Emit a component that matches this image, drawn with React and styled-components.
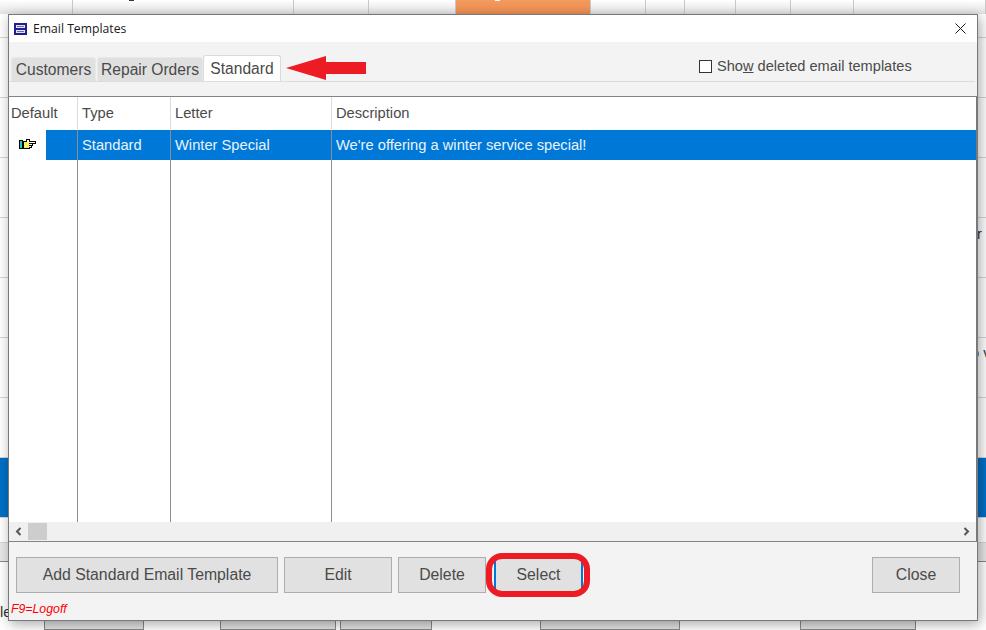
import React from "react";
import styled, { createGlobalStyle } from "styled-components";

const GlobalStyle = createGlobalStyle`
  html, body {
    margin: 0;
    padding: 0;
    background: #ffffff;
  }
  * {
    box-sizing: border-box;
  }
`;

const Page = styled.div`
  position: relative;
  width: 986px;
  height: 630px;
  overflow: hidden;
  font-family: "Liberation Sans", Arial, sans-serif;
  background: #ffffff;
`;

const TopStrip = styled.div`
  display: flex;
  height: 14px;
  background: linear-gradient(#ffffff, #e4e4e4);
`;

const StripCell = styled.div`
  position: relative;
  width: ${(p) => p.$w}px;
  flex: ${(p) => (p.$w ? "none" : "1")};
  border-right: 1px solid #c8c8c8;
  background: ${(p) => (p.$active ? "linear-gradient(#f49a5e, #ee8f52)" : "transparent")};
`;

// bottoms of letters cut off by the top of the window
const StripMark = styled.span`
  position: absolute;
  left: ${(p) => p.$x}px;
  top: 0;
  width: 5px;
  height: 1px;
  background: ${(p) => p.$color};
`;

const Rows = styled.div`
  display: flex;
  flex-direction: column;
`;

const BackRow = styled.div`
  height: ${(p) => p.$h}px;
  background: ${(p) => p.$bg || "#ffffff"};
  border-bottom: 1px solid ${(p) => p.$line || "#d4d4d4"};
`;

const BackLabel = styled.span`
  position: absolute;
  left: ${(p) => p.$left}px;
  top: ${(p) => p.$top}px;
  font-size: 14.67px;
  white-space: nowrap;
  color: #333333;
`;

const BackButtons = styled.div`
  position: absolute;
  left: 0;
  top: 621px;
  display: flex;
  padding-left: 44px;
`;

const BackButton = styled.div`
  width: ${(p) => p.$w}px;
  margin-right: ${(p) => p.$gap}px;
  height: 9px;
  background: #e2e2e2;
  border: 1px solid #8a8a8a;
  border-top: none;
`;

const Dialog = styled.div`
  position: absolute;
  left: 8px;
  top: 14px;
  width: 970px;
  height: 607px;
  display: flex;
  flex-direction: column;
  background: #f3f3f3;
  border: 1px solid #77797c;
  box-shadow: 2px 3px 12px rgba(0, 0, 0, 0.35);
`;

const TitleBar = styled.div`
  height: 27px;
  flex: none;
  display: flex;
  align-items: center;
  gap: 6px;
  padding: 0 11px 0 5px;
  background: #ffffff;
  font-family: "Open Sans", sans-serif;
  font-size: 12.2px;
  color: #1a1a1a;
`;

const TitleText = styled.span`
  flex: 1;
`;

const TabStrip = styled.div`
  position: relative;
  height: 40px;
  flex: none;
  display: flex;
  align-items: flex-end;
  padding: 0 0 0 2px;
  border-bottom: 1px solid #dcdcdc;
  margin-right: 2px;
`;

const Tab = styled.div`
  width: ${(p) => p.$w}px;
  height: ${(p) => (p.$active ? "26px" : "24px")};
  margin-right: ${(p) => p.$gap || 0}px;
  display: flex;
  align-items: center;
  justify-content: center;
  font-size: 15.6px;
  color: #4a4a4a;
  background: ${(p) => (p.$active ? "#ffffff" : "#e0e0e0")};
  border: 1px solid ${(p) => (p.$active ? "#dadada" : "#e8e8e8")};
  border-bottom: none;
  border-radius: 3px 3px 0 0;
`;

const ArrowMark = styled.svg`
  position: absolute;
  left: 277px;
  top: 13px;
`;

const ShowDeleted = styled.label`
  position: absolute;
  left: 690px;
  top: 16px;
  display: flex;
  align-items: center;
  gap: 5px;
  font-size: 14.6px;
  color: #4a4a4a;
`;

const CheckBox = styled.span`
  width: 13px;
  height: 13px;
  background: #ffffff;
  border: 1px solid #333333;
`;

const Mnemonic = styled.span`
  text-decoration: underline;
`;

const ListPanel = styled.div`
  margin-top: 14px;
  flex: 1;
  min-height: 0;
  display: flex;
  flex-direction: column;
  border-top: 1px solid #808488;
  border-bottom: 1px solid #808488;
  border-right: 1px solid #77797c;
  background: #ffffff;
`;

const ListBody = styled.div`
  position: relative;
  flex: 1;
  display: grid;
  grid-template-columns: 69px 93px 161px 1fr;
  grid-template-rows: 33px 30px 1fr;
`;

const HeadCell = styled.div`
  display: flex;
  align-items: center;
  padding-left: ${(p) => p.$pad}px;
  padding-bottom: 2px;
  font-size: 14.7px;
  color: #4a4a4a;
  border-right: ${(p) => (p.$last ? "none" : "1px solid #dcdcdc")};
`;

const RowCell = styled.div`
  display: flex;
  align-items: center;
  padding-left: 4px;
  font-size: 14.7px;
  color: #e9f3fb;
  background: #0078d7;
  border-right: ${(p) => (p.$last ? "none" : "1px solid #8a8f94")};
`;

const PointerCell = styled.div`
  background: linear-gradient(90deg, #ffffff 37px, #0078d7 37px);
  border-right: 1px solid #8a8f94;
  padding: 9px 0 0 10px;
  font-size: 0;
`;

const EmptyCell = styled.div`
  border-right: ${(p) => (p.$last ? "none" : "1px solid #8a8f94")};
`;

const ScrollBar = styled.div`
  height: 19px;
  flex: none;
  display: flex;
  align-items: center;
  background: #f0f0f0;
`;

const ScrollArrow = styled.div`
  width: 19px;
  display: flex;
  justify-content: center;
  font-size: 0;
`;

const ScrollThumb = styled.div`
  width: 19px;
  height: 17px;
  background: #cdcdcd;
`;

const ScrollTrack = styled.div`
  flex: 1;
`;

const Footer = styled.div`
  position: relative;
  height: 78px;
  flex: none;
  display: flex;
  align-items: flex-start;
  padding: 15px 17px 0 7px;
`;

const Button = styled.button`
  width: ${(p) => p.$w}px;
  height: 36px;
  margin-right: ${(p) => p.$gap || 0}px;
  padding: 0;
  font-family: "Liberation Sans", Arial, sans-serif;
  font-size: 15.8px;
  color: #4a4a4a;
  background: #e1e1e1;
  border: 1px solid #adadad;
  ${(p) => p.$focused && "border-left: 2px solid #0078d7; border-right: 2px solid #0078d7; border-bottom: 2px solid #0078d7;"}
`;

const Spacer = styled.div`
  flex: 1;
`;

const Callout = styled.div`
  position: absolute;
  left: 477px;
  top: 11px;
  width: 104px;
  height: 44px;
  border: 6px solid #ed1c24;
  border-radius: 16px;
`;

const LogoffHint = styled.span`
  position: absolute;
  left: 2px;
  top: 60px;
  font-size: 12.3px;
  font-style: italic;
  color: #ff0000;
`;

function WindowIcon() {
  return (
    <svg width="13" height="12" viewBox="0 0 13 12" shapeRendering="crispEdges">
      <rect x="0" y="0" width="13" height="12" rx="1" fill="#20208c" />
      <rect x="2" y="2" width="9" height="3" fill="#e4e4f6" />
      <rect x="2" y="7" width="9" height="3" fill="#e4e4f6" />
      <rect x="3" y="3" width="7" height="1" fill="#6a6ab8" />
      <rect x="3" y="8" width="7" height="1" fill="#6a6ab8" />
    </svg>
  );
}

function CloseIcon() {
  return (
    <svg width="11" height="11" viewBox="0 0 11 11">
      <path d="M0.5 0.5 L10.5 10.5 M10.5 0.5 L0.5 10.5" stroke="#1a1a1a" strokeWidth="1" fill="none" />
    </svg>
  );
}

function PointerIcon() {
  return (
    <svg width="17" height="11" viewBox="0 0 17 11" shapeRendering="crispEdges">
      <rect x="0" y="1" width="4" height="9" fill="#000000" />
      <rect x="1" y="2" width="2" height="7" fill="#19c8c8" />
      <rect x="4" y="2" width="7" height="8" fill="#000000" />
      <rect x="5" y="3" width="5" height="6" fill="#f6f05a" />
      <rect x="7" y="0" width="4" height="2" fill="#000000" />
      <rect x="8" y="1" width="2" height="2" fill="#ffffff" />
      <rect x="10" y="2" width="7" height="3" fill="#000000" />
      <rect x="10" y="3" width="6" height="1" fill="#ffffff" />
      <rect x="10" y="5" width="4" height="2" fill="#000000" />
      <rect x="10" y="5" width="3" height="1" fill="#ffffff" />
      <rect x="10" y="7" width="3" height="2" fill="#000000" />
      <rect x="10" y="7" width="2" height="1" fill="#ffffff" />
    </svg>
  );
}

function Chevron({ right }) {
  return (
    <svg width="7" height="9" viewBox="0 0 7 9">
      <path
        d={right ? "M1.5 1 L5 4.5 L1.5 8" : "M5.5 1 L2 4.5 L5.5 8"}
        stroke="#555555"
        strokeWidth="2"
        fill="none"
      />
    </svg>
  );
}

const stripCells = [73, 221, 75, 87, 135, 55, 39, 51, 55, 63];
const backRows = [
  { h: 24 },
  { h: 60 },
  { h: 60 },
  { h: 60 },
  { h: 60 },
  { h: 60 },
  { h: 60 },
  { h: 60 },
  { h: 60, bg: "#0070c6" },
  { h: 25 },
  { h: 19, bg: "#e8e8e8", line: "#8a8a8a" },
];
const backButtons = [
  { w: 100, gap: 76 },
  { w: 116, gap: 4 },
  { w: 92, gap: 108 },
  { w: 140, gap: 120 },
  { w: 116, gap: 0 },
];

export default function App() {
  return (
    <Page>
      <GlobalStyle />
      <TopStrip>
        {stripCells.map((w, i) => (
          <StripCell key={i} $w={w} $active={i === 4}>
            {i === 1 && <StripMark $x={56} $color="#333333" />}
            {i === 4 && <StripMark $x={39} $color="#ffffff" />}
          </StripCell>
        ))}
        <StripCell />
      </TopStrip>
      <Rows>
        {backRows.map((r, i) => (
          <BackRow key={i} $h={r.h} $bg={r.bg} $line={r.line} />
        ))}
      </Rows>
      <BackLabel $left={0} $top={604}>le</BackLabel>
      <BackLabel $left={977} $top={226}>r</BackLabel>
      <BackLabel $left={971} $top={345}>o v</BackLabel>
      <BackButtons>
        {backButtons.map((b, i) => (
          <BackButton key={i} $w={b.w} $gap={b.gap} />
        ))}
      </BackButtons>

      <Dialog>
        <TitleBar>
          <WindowIcon />
          <TitleText>Email Templates</TitleText>
          <CloseIcon />
        </TitleBar>
        <TabStrip>
          <Tab $w={85} $gap={1}>Customers</Tab>
          <Tab $w={106}>Repair Orders</Tab>
          <Tab $w={78} $active>Standard</Tab>
          <ArrowMark width="80" height="26" viewBox="0 0 80 26">
            <path d="M0 13 L40 1 L40 7 L80 7 L80 19 L40 19 L40 25 Z" fill="#ed1c24" />
          </ArrowMark>
          <ShowDeleted>
            <CheckBox />
            <span>
              Sho<Mnemonic>w</Mnemonic> deleted email templates
            </span>
          </ShowDeleted>
        </TabStrip>
        <ListPanel>
          <ListBody>
            <HeadCell $pad={2}>Default</HeadCell>
            <HeadCell $pad={4}>Type</HeadCell>
            <HeadCell $pad={4}>Letter</HeadCell>
            <HeadCell $pad={4} $last>Description</HeadCell>
            <PointerCell>
              <PointerIcon />
            </PointerCell>
            <RowCell>Standard</RowCell>
            <RowCell>Winter Special</RowCell>
            <RowCell $last>We're offering a winter service special!</RowCell>
            <EmptyCell />
            <EmptyCell />
            <EmptyCell />
            <EmptyCell $last />
          </ListBody>
          <ScrollBar>
            <ScrollArrow>
              <Chevron />
            </ScrollArrow>
            <ScrollThumb />
            <ScrollTrack />
            <ScrollArrow>
              <Chevron right />
            </ScrollArrow>
          </ScrollBar>
        </ListPanel>
        <Footer>
          <Button $w={262} $gap={6}>Add Standard Email Template</Button>
          <Button $w={108} $gap={6}>Edit</Button>
          <Button $w={88} $gap={8}>Delete</Button>
          <Button $w={89} $focused>Select</Button>
          <Spacer />
          <Button $w={88}>Close</Button>
          <Callout />
          <LogoffHint>F9=Logoff</LogoffHint>
        </Footer>
      </Dialog>
    </Page>
  );
}
